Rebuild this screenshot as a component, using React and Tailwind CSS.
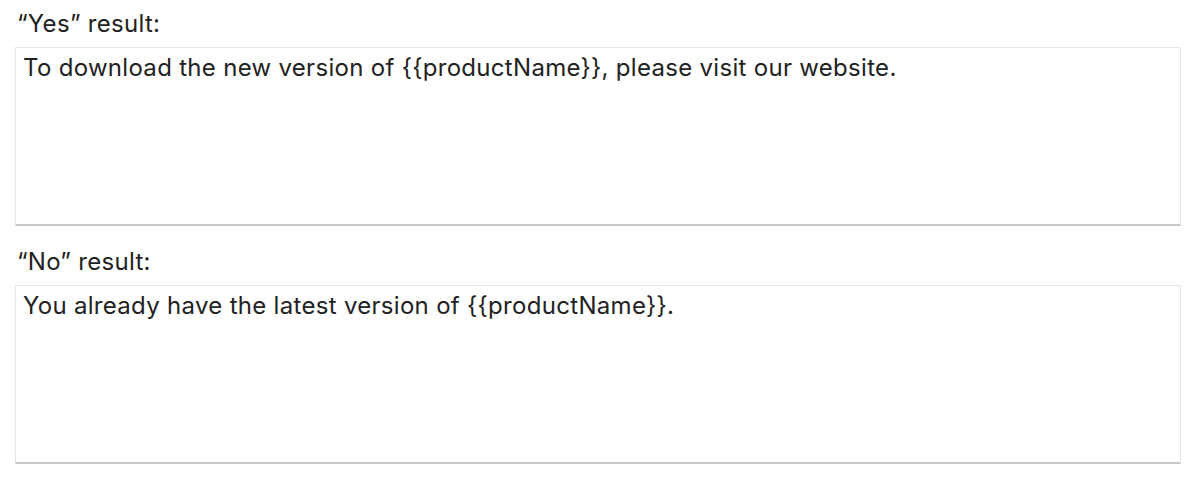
import React from "react";

function ResultField({ label, value }) {
  return (
    <div className="flex flex-col">
      <label className="text-[24px] leading-[28px] tracking-[0.3px] text-[#222] pl-[2px] mb-[9px]">{label}</label>
      <textarea
        defaultValue={value}
        className="h-[179px] w-full resize-none bg-white border border-[#e6e6e6] border-b-[#c8c8c8] border-b-2 px-[7px] pt-[5px] text-[24px] leading-[30px] tracking-[0.3px] text-[#222] outline-none"
        style={{ fontFamily: 'Inter, "Liberation Sans", Arial, sans-serif' }}
      />
    </div>
  );
}

export default function App() {
  return (
    <div
      className="w-[1192px] h-[478px] bg-white pl-[15px] pr-[11px] pt-[10px] flex flex-col gap-[22px]"
      style={{ fontFamily: 'Inter, "Liberation Sans", Arial, sans-serif' }}
    >
      <ResultField
        label="“Yes” result:"
        value="To download the new version of {{productName}}, please visit our website."
      />
      <ResultField
        label="“No” result:"
        value="You already have the latest version of {{productName}}."
      />
    </div>
  );
}
